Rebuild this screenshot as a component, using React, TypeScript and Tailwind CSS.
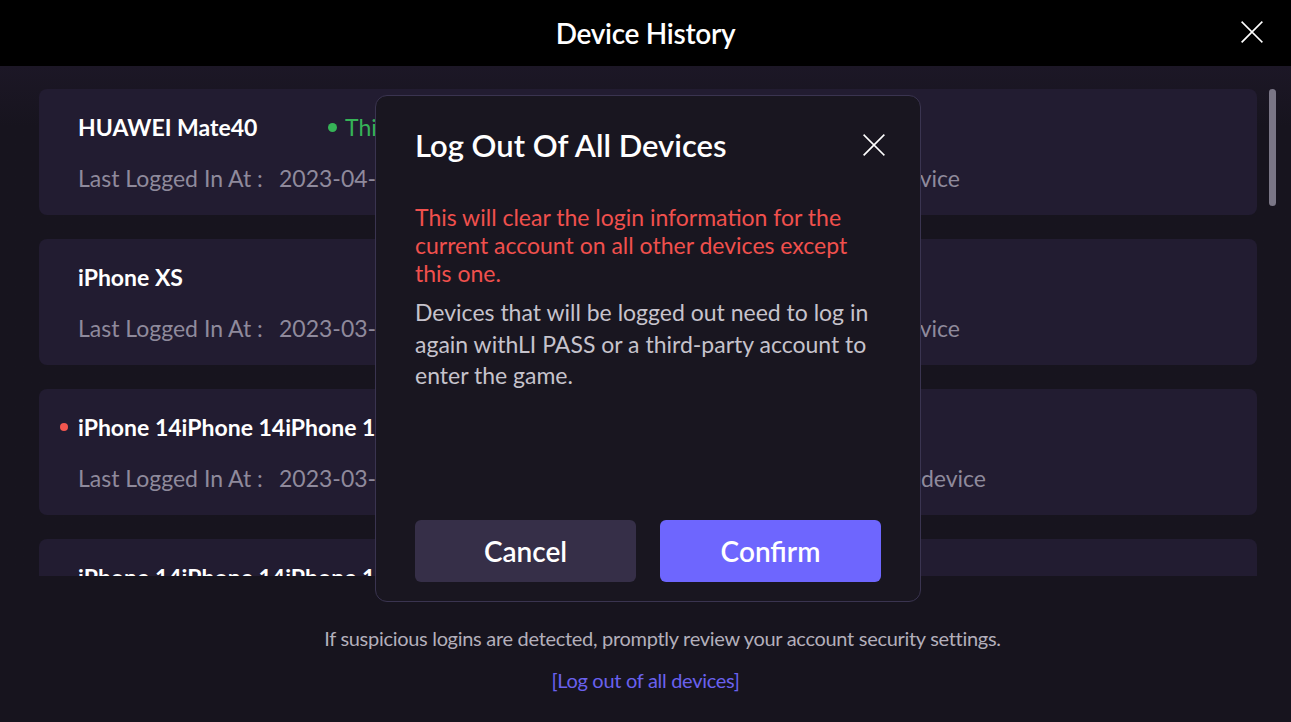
import React from 'react';

interface Device {
  name: string;
  date: string;
  place: string;
  placeWidth: string;
  current?: boolean;
  unread?: boolean;
}

const devices: Device[] = [
  { name: 'HUAWEI Mate40', date: '2023-04-12 18:32:05', place: 'Guangdong, China · Android device', placeWidth: 'w-[451px]', current: true },
  { name: 'iPhone XS', date: '2023-03-28 09:14:51', place: 'Shanghai, China · iOS device', placeWidth: 'w-[451px]' },
  { name: 'iPhone 14iPhone 14iPhone 14iPhone 14', date: '2023-03-16 21:47:33', place: 'Hangzhou, China · iOS mobile device', placeWidth: 'w-[477px]', unread: true },
  { name: 'iPhone 14iPhone 14iPhone 14iPhone 14', date: '2023-03-02 07:05:19', place: 'Beijing, China · iOS mobile device', placeWidth: 'w-[477px]' },
];

const CloseIcon = ({ className }: { className?: string }) => (
  <svg className={className} viewBox="0 0 24 24" fill="none" stroke="currentColor" strokeWidth="1.6" strokeLinecap="square">
    <path d="M3 3l18 18M21 3L3 21" />
  </svg>
);

const DeviceCard = ({ d }: { d: Device }) => (
  <div className="h-[126px] shrink-0 rounded-[8px] bg-[#221c31] pl-[39px] pt-[24px]">
    <div className="flex items-center h-[28px]">
      <div className="relative w-[250px] shrink-0">
        {d.unread && <span className="absolute left-[-18px] top-[10px] w-[8px] h-[8px] rounded-full bg-[#f2564f]"></span>}
        <p className="text-[23px] font-bold text-white whitespace-nowrap leading-[28px]">{d.name}</p>
      </div>
      {d.current && (
        <div className="flex items-center gap-[8px] text-[23px] text-[#36b357]">
          <span className="w-[9px] h-[9px] rounded-full bg-[#36b357]"></span>
          This device
        </div>
      )}
    </div>
    <div className="flex items-center h-[28px] mt-[23px] text-[23px] text-[#8f8a9c] whitespace-nowrap">
      <span className="w-[201px] shrink-0">Last Logged In At :</span>
      <span className="w-[230px] shrink-0">{d.date}</span>
      <span className={`${d.placeWidth} shrink-0 text-right`}>{d.place}</span>
    </div>
  </div>
);

export default function App() {
  return (
    <div className="relative w-[1291px] h-[722px] bg-[#17141e] overflow-hidden" style={{ fontFamily: 'Lato, "Noto Sans", sans-serif' }}>
      {/* Header */}
      <div className="relative h-[66px] bg-black flex items-center justify-center">
        <h1 className="text-[28px] font-semibold text-white tracking-[-0.3px]">Device History</h1>
        <button className="absolute right-[26px] top-[19px] text-white">
          <CloseIcon className="w-[26px] h-[26px]" />
        </button>
      </div>

      {/* List */}
      <div className="relative h-[510px] overflow-hidden bg-gradient-to-b from-[#1c1726] to-[#17141e] to-[60px]">
        <div className="flex flex-col gap-[24px] pt-[23px] pl-[39px] w-[1257px]">
          {devices.map((d, i) => (
            <DeviceCard key={i} d={d} />
          ))}
        </div>
        <div className="absolute right-[15px] top-[23px] w-[7px] h-[117px] rounded-full bg-[#7a7686]"></div>
      </div>

      {/* Footer */}
      <div className="flex flex-col items-center pt-[50px]">
        <p className="ml-[34px] text-[20px] text-[#b3afbb] leading-[24px] tracking-[-0.3px]">If suspicious logins are detected, promptly review your account security settings.</p>
        <a className="mt-[18px] text-[20px] text-[#6a61ee] leading-[24px] tracking-[-0.3px]">[Log out of all devices]</a>
      </div>

      {/* Modal */}
      <div className="absolute left-[375px] top-[95px] w-[546px] h-[507px] rounded-[12px] border-[1.5px] border-[#3a3450] bg-[#191620] px-[39px] flex flex-col">
        <div className="flex items-center justify-between h-[50px] mt-[24px]">
          <h2 className="text-[31px] font-semibold text-white">Log Out Of All Devices</h2>
          <button className="text-white mr-[-6px]">
            <CloseIcon className="w-[26px] h-[26px]" />
          </button>
        </div>
        <p className="mt-[33px] text-[23px] leading-[28px] text-[#f0504d]">
          This will clear the login information for the current account on all other devices except this one.
        </p>
        <p className="mt-[10px] text-[23px] leading-[31.5px] text-[#c6c3cc]">
          Devices that will be logged out need to log in again withLI PASS or a third-party account to enter the game.
        </p>
        <div className="mt-auto mb-[19px] flex gap-[24px]">
          <button className="w-[221px] h-[62px] rounded-[6px] bg-[#362f48] text-white text-[28px] font-semibold">Cancel</button>
          <button className="w-[221px] h-[62px] rounded-[6px] bg-[#6e66fe] text-white text-[28px] font-semibold">Confirm</button>
        </div>
      </div>
    </div>
  );
}
